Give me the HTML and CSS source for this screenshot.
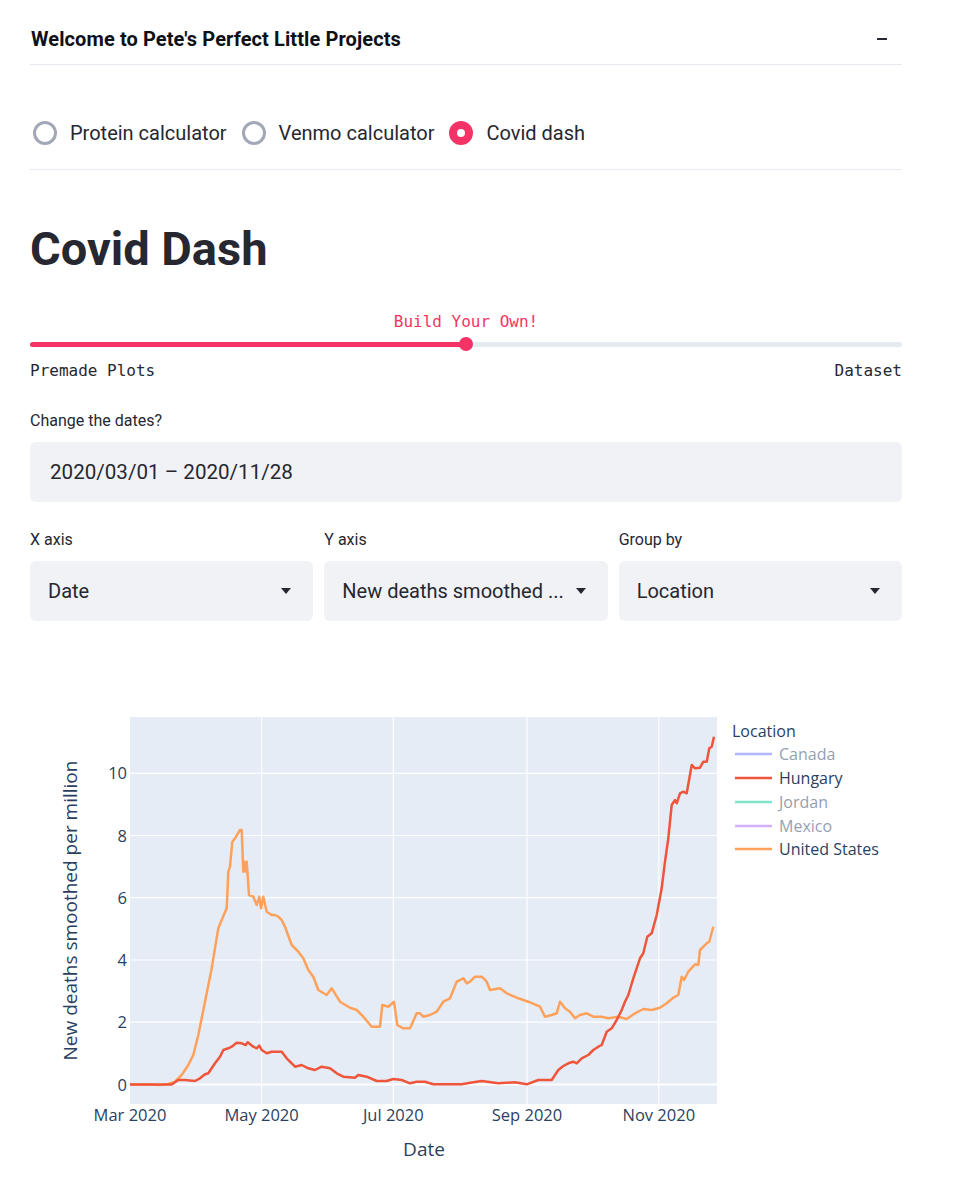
FILE: index.html
```html
<!DOCTYPE html>
<html lang="en">
<head>
<meta charset="utf-8">
<title>Covid Dash</title>
<link rel="stylesheet" href="styles.css">
</head>
<body>
<div class="app">
  <div class="expander-header">
    <span class="exp-title">Welcome to Pete's Perfect Little Projects</span>
    <span class="exp-toggle"></span>
  </div>

  <div class="radio-group">
    <div class="radio"><span class="radio-dot"></span><span class="radio-label">Protein calculator</span></div>
    <div class="radio"><span class="radio-dot"></span><span class="radio-label">Venmo calculator</span></div>
    <div class="radio checked"><span class="radio-dot"></span><span class="radio-label">Covid dash</span></div>
  </div>

  <h1 class="title">Covid Dash</h1>

  <div class="slider">
    <div class="slider-value">Build Your Own!</div>
    <div class="slider-track">
      <div class="slider-rail"><div class="slider-fill" style="width:50%"></div></div>
      <div class="slider-thumb" style="left:50%"></div>
    </div>
    <div class="slider-ticks"><span>Premade Plots</span><span>Dataset</span></div>
  </div>

  <div class="field">
    <div class="field-label">Change the dates?</div>
    <div class="input-box date">2020/03/01 – 2020/11/28</div>
  </div>

  <div class="select-row">
    <div class="field">
      <div class="field-label">X axis</div>
      <div class="input-box select"><span class="select-text">Date</span><svg class="caret" viewBox="0 0 10 6" width="10" height="6"><path d="M0 0h10L5 6z"/></svg></div>
    </div>
    <div class="field">
      <div class="field-label">Y axis</div>
      <div class="input-box select"><span class="select-text">New deaths smoothed ...</span><svg class="caret" viewBox="0 0 10 6" width="10" height="6"><path d="M0 0h10L5 6z"/></svg></div>
    </div>
    <div class="field">
      <div class="field-label">Group by</div>
      <div class="input-box select"><span class="select-text">Location</span><svg class="caret" viewBox="0 0 10 6" width="10" height="6"><path d="M0 0h10L5 6z"/></svg></div>
    </div>
  </div>

  <svg class="chart" viewBox="30 650 872 530" width="872" height="530">
    <rect x="130" y="717" width="587" height="387" fill="#E5ECF6"/>
    <g stroke="#ffffff" stroke-width="1.2">
      <line x1="261.6" y1="717" x2="261.6" y2="1104"/>
      <line x1="393.3" y1="717" x2="393.3" y2="1104"/>
      <line x1="527" y1="717" x2="527" y2="1104"/>
      <line x1="658.8" y1="717" x2="658.8" y2="1104"/>
      <line x1="130" y1="773.3" x2="717" y2="773.3"/>
      <line x1="130" y1="835.5" x2="717" y2="835.5"/>
      <line x1="130" y1="897.7" x2="717" y2="897.7"/>
      <line x1="130" y1="960" x2="717" y2="960"/>
      <line x1="130" y1="1022.2" x2="717" y2="1022.2"/>
      <line x1="130" y1="1084.5" x2="717" y2="1084.5" stroke-width="2.2"/>
    </g>
    <polyline fill="none" stroke="#FFA15A" stroke-width="2.5" stroke-linejoin="round"
      points="130,1084.5 150,1084.5 160,1085 168,1084 175,1081.7 181.7,1075 188.3,1065 193.3,1055 198.3,1035 205,1001.7 211.7,968.3 218.3,928.3 221.7,920 226.7,908.3 228.3,871.7 230,866.7 232.3,841.7 235,838.3 240,830 241.7,830 243.3,871.7 244.3,861.7 245.7,871.7 246.7,861.7 249,895 253.3,896.7 256.7,905 259.3,896.7 261,908.3 263.3,896.7 266.7,911.7 271.7,915 275,915 278.3,916.7 281.7,920 285,926.7 291.7,945 298.3,951.7 303.3,958.3 308.3,970 313.3,976.7 318.3,990 326.7,995 331.7,988.3 340,1001.7 350,1007.7 356.7,1010 363.3,1016.7 371.7,1026.7 380,1026.7 382.3,1005 388.3,1006.7 394,1001.7 397.3,1025 403.3,1028.3 410,1028.3 416.7,1013.3 420,1013.3 423.3,1016.7 430,1015 436.7,1011.7 443.3,1001.7 450,998.3 456.7,981.7 463.3,978.3 466.7,983.3 470,981.7 475,976.7 481.7,976.7 486.7,981.7 490,990 500,988.3 506.7,993.3 518.3,998.3 528.3,1001.7 540,1006.7 545,1016.7 551.7,1015 556.7,1013.3 560,1001.7 565,1008.3 570,1011.7 575,1018.3 580,1015 586.7,1013.3 593.3,1016.7 601.7,1016.7 608.3,1018.3 618.3,1016.7 626.7,1019 635,1013.3 643.3,1009 651.7,1010 660,1007.7 666.7,1003.3 673.3,997.7 678.3,995 681.7,976.7 684,980 688.3,971.7 695,964.3 698.3,965 700,950 706.7,943.3 709.3,941.7 713.3,926.7"/>
    <polyline fill="none" stroke="#EF553B" stroke-width="2.5" stroke-linejoin="round"
      points="130,1084.5 171.7,1084.5 178.3,1080 185,1080 195,1081 200,1078.3 205,1074.3 208.3,1073.3 215,1063.3 220,1056.7 223.3,1050 228.3,1048.3 231.7,1046.7 236.7,1042.7 241.7,1043.3 245.7,1045 247.7,1042.3 253.3,1046.7 256.7,1048.3 259.3,1045.7 261.7,1050 266.7,1053.3 271.7,1051.7 281.7,1051.7 286.7,1058.3 295,1066.7 301.7,1065 308.3,1068.3 315,1070 321.7,1066.7 330,1068.3 336.7,1073.3 343.3,1076.7 355,1077.7 358.3,1075 366.7,1076.7 376.7,1081 386.7,1081 393.3,1079 401.7,1080 410,1083.3 416.7,1081.7 425,1081.7 433.3,1084.3 461.7,1084.3 473.3,1082.3 481.7,1081 498.3,1083.3 515,1082.3 526.7,1084.3 538.3,1080 551.7,1080 558.3,1070 563.3,1066 568.3,1063.3 573.3,1061.7 576.7,1063.3 581.7,1058.3 588.3,1055 593.3,1050 598.3,1046.7 601.7,1045 606.7,1031.7 611.7,1028.3 616.7,1020 621.7,1010 625,1001.7 628.3,995 633.3,978.3 640,958.3 643.3,953.3 647.3,936.7 651.7,933.3 656.7,915 661.7,888.3 665,861.7 668.3,838.3 671.7,805 675,800 676.7,803.3 680,793.3 683.3,791.7 686.7,793.3 691.7,765 695,768.3 700,767.7 703.3,761.7 706.7,761.7 709.3,748.3 711.7,746.7 714,736.7"/>
    <g class="tick" text-anchor="end">
      <text x="127" y="1090.5">0</text>
      <text x="127" y="1028.2">2</text>
      <text x="127" y="966">4</text>
      <text x="127" y="903.7">6</text>
      <text x="127" y="841.5">8</text>
      <text x="127" y="779.3">10</text>
    </g>
    <g class="tick" text-anchor="middle">
      <text x="130" y="1121">Mar 2020</text>
      <text x="261.6" y="1121">May 2020</text>
      <text x="393.3" y="1121">Jul 2020</text>
      <text x="527" y="1121">Sep 2020</text>
      <text x="658.8" y="1121">Nov 2020</text>
    </g>
    <text class="axis-title" x="424" y="1155.5" text-anchor="middle">Date</text>
    <text class="axis-title" x="0" y="0" text-anchor="middle" transform="translate(76.5 910.5) rotate(-90)">New deaths smoothed per million</text>
    <g class="legend">
      <text x="732" y="737">Location</text>
      <line x1="735" y1="754" x2="772" y2="754" stroke="#636EFA" stroke-width="2.5" opacity="0.5"/>
      <text x="779" y="760" opacity="0.5">Canada</text>
      <line x1="735" y1="778" x2="772" y2="778" stroke="#EF553B" stroke-width="2.5"/>
      <text x="779" y="784">Hungary</text>
      <line x1="735" y1="802" x2="772" y2="802" stroke="#00CC96" stroke-width="2.5" opacity="0.5"/>
      <text x="779" y="808" opacity="0.5">Jordan</text>
      <line x1="735" y1="826" x2="772" y2="826" stroke="#AB63FA" stroke-width="2.5" opacity="0.5"/>
      <text x="779" y="832" opacity="0.5">Mexico</text>
      <line x1="735" y1="849" x2="772" y2="849" stroke="#FFA15A" stroke-width="2.5"/>
      <text x="779" y="855">United States</text>
    </g>
  </svg>
</div>
</body>
</html>
```

FILE: styles.css
```css
* { box-sizing: border-box; }

body {
  margin: 0;
  background: #ffffff;
  color: #262730;
  font-family: Roboto, "Liberation Sans", sans-serif;
}

.app {
  width: 960px;
  padding: 0 58px 0 30px;
}

.expander-header {
  display: flex;
  align-items: center;
  justify-content: space-between;
  margin-top: 14px;
  height: 51px;
  border-bottom: 1px solid #e6eaf1;
  padding: 0 15px 0 1px;
}

.exp-title {
  font-size: 20px;
  font-weight: 700;
  color: #0e1117;
  letter-spacing: 0.1px;
}

.exp-toggle {
  width: 10px;
  height: 2px;
  background: #262730;
}

.radio-group {
  display: flex;
  align-items: center;
  gap: 15px;
  height: 105px;
  padding: 32px 0 0 3px;
  border-bottom: 1px solid #e6eaf1;
}

.radio {
  display: flex;
  align-items: center;
  gap: 13px;
}

.radio-dot {
  width: 24px;
  height: 24px;
  border-radius: 50%;
  border: 3px solid #a3a8b8;
  flex: none;
}

.radio.checked .radio-dot {
  border: 8px solid #f63366;
  background: #ffffff;
}

.radio-label {
  font-size: 20px;
  color: #262730;
}

.title {
  margin: 52px 0 0 0;
  font-size: 47px;
  line-height: 53px;
  font-weight: 700;
  color: #262730;
  letter-spacing: 0;
}

.slider {
  margin-top: 37px;
  font-family: "DejaVu Sans Mono", "Liberation Mono", monospace;
}

.slider-value {
  text-align: center;
  font-size: 16px;
  line-height: 20px;
  color: #f63366;
}

.slider-track {
  position: relative;
  height: 24px;
  display: flex;
  align-items: center;
}

.slider-rail {
  width: 100%;
  height: 5px;
  border-radius: 3px;
  background: #e6eaf1;
  overflow: hidden;
}

.slider-fill {
  height: 100%;
  background: #f63366;
}

.slider-thumb {
  position: absolute;
  top: 5px;
  width: 14px;
  height: 14px;
  margin-left: -7px;
  border-radius: 50%;
  background: #f63366;
}

.slider-ticks {
  display: flex;
  justify-content: space-between;
  margin-top: 5px;
  font-size: 16px;
  line-height: 20px;
  color: #262730;
}

.field-label {
  font-size: 16px;
  line-height: 20px;
  color: #262730;
}

.slider + .field {
  margin-top: 30px;
}

.input-box {
  margin-top: 11px;
  height: 60px;
  background: #f0f2f6;
  border-radius: 6px;
  display: flex;
  align-items: center;
  padding: 0 20px;
  font-size: 20px;
  color: #262730;
}

.input-box.date {
  font-size: 20.6px;
}

.select-row {
  margin-top: 28px;
  display: grid;
  grid-template-columns: repeat(3, minmax(0, 1fr));
  gap: 11px;
}

.select {
  padding: 0 22px 0 18px;
  gap: 10px;
}

.select-text {
  flex: 1;
  min-width: 0;
  white-space: nowrap;
}

.caret {
  flex: none;
  fill: #262730;
}

.chart {
  display: block;
  margin-top: 29px;
  font-family: "Open Sans", sans-serif;
}

.tick text {
  font-size: 16.5px;
  fill: #2a3f5f;
}

.axis-title {
  font-size: 19px;
  fill: #2a3f5f;
}

.legend text {
  font-size: 16px;
  fill: #2a3f5f;
}
```
